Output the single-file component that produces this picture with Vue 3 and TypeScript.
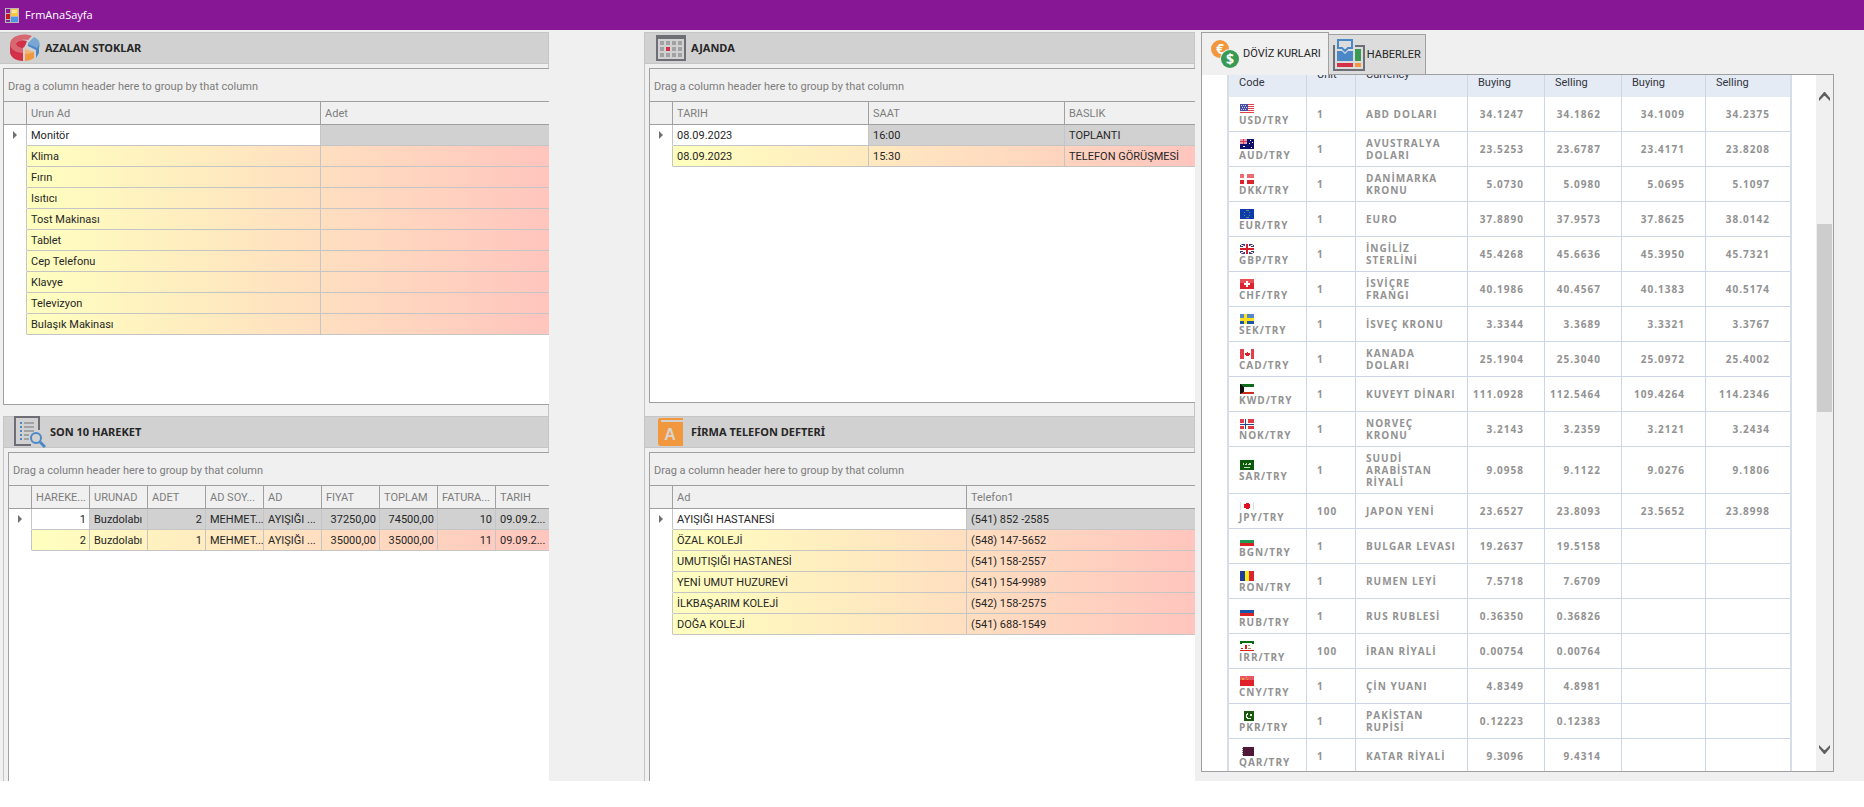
<script setup lang="ts">
import { ref } from 'vue'

interface Column {
  title: string
  width?: number
  numeric?: boolean
}
interface Panel {
  icon: 'chart' | 'calendar' | 'list' | 'book'
  title: string
  columns: Column[]
  rows: string[][]
}
interface Rate {
  code: string
  unit: number
  name: string
  values: string[]
}

const stocks: Panel = {
  icon: 'chart',
  title: 'AZALAN STOKLAR',
  columns: [{ title: 'Urun Ad', width: 294 }, { title: 'Adet' }],
  rows: [
    'Monitör', 'Klima', 'Fırın', 'Isıtıcı', 'Tost Makinası',
    'Tablet', 'Cep Telefonu', 'Klavye', 'Televizyon', 'Bulaşık Makinası'
  ].map((name) => [name, ''])
}

const movements: Panel = {
  icon: 'list',
  title: 'SON 10 HAREKET',
  columns: [
    { title: 'HAREKE...', width: 58, numeric: true },
    { title: 'URUNAD', width: 58 },
    { title: 'ADET', width: 58, numeric: true },
    { title: 'AD SOY...', width: 58 },
    { title: 'AD', width: 58 },
    { title: 'FIYAT', width: 58, numeric: true },
    { title: 'TOPLAM', width: 58, numeric: true },
    { title: 'FATURA...', width: 58, numeric: true },
    { title: 'TARIH' }
  ],
  rows: [
    ['1', 'Buzdolabı', '2', 'MEHMET...', 'AYIŞIĞI ...', '37250,00', '74500,00', '10', '09.09.2...'],
    ['2', 'Buzdolabı', '1', 'MEHMET...', 'AYIŞIĞI ...', '35000,00', '35000,00', '11', '09.09.2...']
  ]
}

const agenda: Panel = {
  icon: 'calendar',
  title: 'AJANDA',
  columns: [{ title: 'TARIH', width: 196 }, { title: 'SAAT', width: 196 }, { title: 'BASLIK' }],
  rows: [
    ['08.09.2023', '16:00', 'TOPLANTI'],
    ['08.09.2023', '15:30', 'TELEFON GÖRÜŞMESİ']
  ]
}

const phones: Panel = {
  icon: 'book',
  title: 'FİRMA TELEFON DEFTERİ',
  columns: [{ title: 'Ad', width: 294 }, { title: 'Telefon1' }],
  rows: [
    ['AYIŞIĞI HASTANESİ', '(541) 852 -2585'],
    ['ÖZAL KOLEJİ', '(548) 147-5652'],
    ['UMUTIŞIĞI HASTANESİ', '(541) 158-2557'],
    ['YENİ UMUT HUZUREVİ', '(541) 154-9989'],
    ['İLKBAŞARIM KOLEJİ', '(542) 158-2575'],
    ['DOĞA KOLEJİ', '(541) 688-1549']
  ]
}

const sides: Panel[][] = [
  [stocks, movements],
  [agenda, phones]
]

const activeTab = ref(0)

const rate = (code: string, unit: number, name: string, ...values: string[]): Rate => ({
  code,
  unit,
  name,
  values: [0, 1, 2, 3].map((i) => values[i] ?? '')
})

const rates: Rate[] = [
  rate('USD', 1, 'ABD DOLARI', '34.1247', '34.1862', '34.1009', '34.2375'),
  rate('AUD', 1, 'AVUSTRALYA\nDOLARI', '23.5253', '23.6787', '23.4171', '23.8208'),
  rate('DKK', 1, 'DANİMARKA\nKRONU', '5.0730', '5.0980', '5.0695', '5.1097'),
  rate('EUR', 1, 'EURO', '37.8890', '37.9573', '37.8625', '38.0142'),
  rate('GBP', 1, 'İNGİLİZ\nSTERLİNİ', '45.4268', '45.6636', '45.3950', '45.7321'),
  rate('CHF', 1, 'İSVİÇRE\nFRANGI', '40.1986', '40.4567', '40.1383', '40.5174'),
  rate('SEK', 1, 'İSVEÇ KRONU', '3.3344', '3.3689', '3.3321', '3.3767'),
  rate('CAD', 1, 'KANADA\nDOLARI', '25.1904', '25.3040', '25.0972', '25.4002'),
  rate('KWD', 1, 'KUVEYT DİNARI', '111.0928', '112.5464', '109.4264', '114.2346'),
  rate('NOK', 1, 'NORVEÇ\nKRONU', '3.2143', '3.2359', '3.2121', '3.2434'),
  rate('SAR', 1, 'SUUDİ\nARABİSTAN\nRİYALİ', '9.0958', '9.1122', '9.0276', '9.1806'),
  rate('JPY', 100, 'JAPON YENİ', '23.6527', '23.8093', '23.5652', '23.8998'),
  rate('BGN', 1, 'BULGAR LEVASI', '19.2637', '19.5158'),
  rate('RON', 1, 'RUMEN LEYİ', '7.5718', '7.6709'),
  rate('RUB', 1, 'RUS RUBLESİ', '0.36350', '0.36826'),
  rate('IRR', 100, 'İRAN RİYALİ', '0.00754', '0.00764'),
  rate('CNY', 1, 'ÇİN YUANI', '4.8349', '4.8981'),
  rate('PKR', 1, 'PAKİSTAN\nRUPİSİ', '0.12223', '0.12383'),
  rate('QAR', 1, 'KATAR RİYALİ', '9.3096', '9.4314')
]

// Each flag is a stack of [colour, path] layers on a 14 by 10 field.
const full = 'M0 0h14v10H0z'
const flags: Record<string, [string, string][]> = {
  USD: [
    ['#fff', full],
    ['#e2404a', 'M0 0h14v1H0zM0 2h14v1H0zM0 4h14v1H0zM0 6h14v1H0zM0 8h14v1H0z'],
    ['#4a4fa0', 'M0 0h8v7H0z'],
    ['#c4c8e6', 'M1 1h1v1H1zM3 1h1v1H3zM5 1h1v1H5zM2 3h1v1H2zM4 3h1v1H4zM6 3h1v1H6zM1 5h1v1H1zM3 5h1v1H3zM5 5h1v1H5z']
  ],
  AUD: [
    ['#10106e', full],
    ['#e6a0b4', 'M0 0h7v5H0z'],
    ['#d8384a', 'M3 0h1v5H3zM0 2h7v1H0z'],
    ['#fff', 'M10 1h1v1h-1zM12 3h1v1h-1zM9 4h1v1H9zM3 7h2v1H3zM11 8h1v1h-1z']
  ],
  DKK: [['#dc2430', full], ['#ec6a70', 'M0 0h14v4H0z'], ['#fff', 'M4 0h3v10H4zM0 4h14v2H0z']],
  EUR: [
    ['#0c3cac', full],
    ['#6d8a6e', 'M6 1h3v1H6zM4 3h1v1H4zM9 3h1v1H9zM4 6h1v1H4zM9 6h1v1H9zM6 8h3v1H6z']
  ],
  GBP: [
    ['#2c3a8c', full],
    ['#fff', 'M0 0h2v1h2v1h1v6H4v1H2v1H0V9h1V8h2V6h8v2h2v1h1v1h-2V9h-2V8H9V2h1V1h2V0h2v1h-1v1h-2v2H3V2H1V1H0z'],
    ['#fff', 'M5 0h4v10H5zM0 3h14v4H0z'],
    ['#e07080', 'M1 0h1v1H1zM3 1h1v1H3zM12 0h1v1h-1zM10 1h1v1h-1zM1 9h1v1H1zM3 8h1v1H3zM12 9h1v1h-1zM10 8h1v1h-1z'],
    ['#d4202c', 'M6 0h2v10H6zM0 4h14v2H0z']
  ],
  CHF: [['#dc2430', full], ['#e85058', 'M0 0h14v4H0z'], ['#fff', 'M6 2h2v6H6zM4 4h6v2H4z']],
  SEK: [['#1858a8', full], ['#5288cc', 'M0 0h14v4H0z'], ['#ffe01c', 'M4 0h3v10H4zM0 4h14v3H0z']],
  CAD: [
    ['#fff', full],
    ['#e04048', 'M0 0h4v10H0zM11 0h3v10h-3z'],
    ['#dc2028', 'M7 3h1v1h2v2H9v1H6V6H5V4h2z']
  ],
  KWD: [['#fff', full], ['#106c1c', 'M0 0h14v3H0z'], ['#c8301c', 'M0 8h14v2H0z'], ['#101010', 'M0 0l4 3v5l-4 2z']],
  NOK: [['#e03c48', full], ['#fff', 'M4 0h4v10H4zM0 4h14v3H0z'], ['#2c4494', 'M5 0h1v10H5zM0 5h14v1H0z']],
  SAR: [['#0a5a0a', full], ['#c8dcc8', 'M3 3h1v2H3zM5 4h1v1H5zM6 3h1v2H6zM8 4h1v1H8zM9 3h2v2H9zM4 7h6v1H4z']],
  JPY: [['#fff', full], ['#dcdcdc', 'M0 1h1v8H0zM13 1h1v8h-1z'], ['#e01020', 'M6 2h3v1h1v4H9v1H6V7H4V3h2z']],
  BGN: [['#fff', full], ['#1e9a56', 'M0 4h14v3H0z'], ['#dc2020', 'M0 7h14v3H0z']],
  RON: [['#1c3c9c', 'M0 0h5v10H0z'], ['#ffec10', 'M5 0h4v10H5z'], ['#d8242c', 'M9 0h5v10H9z']],
  RUB: [['#fff', full], ['#1656ac', 'M0 4h14v3H0z'], ['#dc2424', 'M0 7h14v3H0z']],
  IRR: [
    ['#fff', full],
    ['#0c6c14', 'M0 0h14v2H0zM0 2h2v1H0zM12 2h2v1h-2z'],
    ['#e02020', 'M0 9h14v1H0zM5 4h2v4H5zM1 7h2v1H1z'],
    ['#a8906c', 'M8 4h2v1H8zM8 7h3v1H8z']
  ],
  CNY: [['#e02028', full], ['#e85860', 'M0 0h14v4H0z'], ['#f4a030', 'M2 2h2v2H2zM6 1h1v1H6zM7 3h1v1H7z']],
  PKR: [['#1c5810', 'M4 0h10v10H4z'], ['#e4f0e0', 'M8 2H7v1H6v4h1v1h4V7H8V6H7V4h1zM10 3h2v2h-2z']],
  QAR: [['#501838', 'M3 1h11v9H3z'], ['#8c6c7c', 'M2 2h1v1H2zM2 4h1v1H2zM2 6h1v1H2zM2 8h1v1H2z']]
}
</script>

<template>
  <div class="window">
    <header class="titlebar">
      <svg class="app-icon" viewBox="0 0 14 15" aria-hidden="true">
        <path fill="#b9b4bd" d="M0 0h14v15H0z" />
        <path fill="#8c1a96" d="M1 1h4v4H1z" />
        <path fill="#c41a1c" d="M1 6h4v5H1z" />
        <path fill="#f7c840" d="M6 1h7v7H6z" />
        <path fill="#ffe89a" d="M7 2h5v3H7z" />
        <path fill="#4f96e0" d="M6 9h7v5H6z" />
        <path fill="#7a3088" d="M1 12h4v2H1z" />
      </svg>
      <h1>FrmAnaSayfa</h1>
    </header>

    <main class="workspace">
      <div v-for="(side, s) in sides" :key="s" class="side" :class="s === 0 ? 'side-left' : 'side-middle'">
        <section v-for="panel in side" :key="panel.title" class="panel" :class="'panel-' + panel.icon">
          <h2 class="caption">
            <svg v-if="panel.icon === 'chart'" class="icon" viewBox="0 0 32 32" aria-hidden="true">
              <path fill="#d3304a" d="M1 12v8c0 5 6 9 13 9v-9z" />
              <path fill="#d76872" fill-rule="evenodd" d="M23 4C14 0 1 4 1 12c0 5 6 9 13 9v-5c-4 0-7-2-7-4 0-3 6-5 12-4z" />
              <path fill="#d3304a" d="M7 12c0-3 6-5 11-3l-2 5-2 2c-4 0-7-2-7-4z" />
              <path fill="#79a6d4" d="M25 5c5 2 7 7 5 11l-2 1-9-4v-2z" />
              <path fill="#4a88c8" d="M30 13v8l-3 5v-8l-8-4v-2l9 4z" />
              <path fill="#f4b475" d="M16 17l9 3c-2 2-5 3-9 3z" />
              <path fill="#f1973e" d="M16 22c4 0 7-1 9-2v6c-3 2-6 3-9 3z" />
            </svg>
            <svg v-else-if="panel.icon === 'calendar'" class="icon" viewBox="0 0 32 32" aria-hidden="true">
              <path fill="#6d6e76" fill-rule="evenodd" d="M1 3h30v26H1zM3 7v20h26V7z" />
              <path fill="#a2a2a4" d="M5 9h4v4H5zM11 9h4v4h-4zM17 9h4v4h-4zM23 9h4v4h-4zM5 15h4v4H5zM17 15h4v4h-4zM23 15h4v4h-4zM5 21h4v4H5zM11 21h4v4h-4zM17 21h4v4h-4zM23 21h4v4h-4z" />
              <path fill="#d3304a" d="M11 15h4v4h-4z" />
            </svg>
            <svg v-else-if="panel.icon === 'list'" class="icon" viewBox="0 0 32 32" aria-hidden="true">
              <path fill="none" stroke="#6d6e76" stroke-width="2" d="M25 14V1H1v28h16" />
              <path fill="#4a88c8" d="M6 6h2v2H6zM6 10h2v2H6zM6 14h2v2H6zM6 18h2v2H6zM6 22h2v2H6z" />
              <path fill="#a2a2a4" d="M10 6h10v2H10zM10 10h10v2H10zM10 14h10v2H10zM10 18h5v2h-5zM10 22h5v2h-5z" />
              <circle cx="22" cy="22" r="5" fill="none" stroke="#4a88c8" stroke-width="2" />
              <path stroke="#4a88c8" stroke-width="3" d="M26 26l5 5" />
            </svg>
            <svg v-else class="icon" viewBox="0 0 32 32" aria-hidden="true">
              <path fill="#f1973e" d="M5 2h23v2H6v2h22v24H6c-2 0-3-1-3-3V4c0-1 1-2 2-2z" />
              <text x="15" y="24" text-anchor="middle" class="icon-letter">A</text>
            </svg>
            <span>{{ panel.title }}</span>
          </h2>
          <div class="gridbox">
            <p class="group-hint">Drag a column header here to group by that column</p>
            <table class="datagrid">
              <colgroup>
                <col style="width: 23px" />
                <col v-for="c in panel.columns" :key="c.title" :style="c.width ? { width: c.width + 'px' } : {}" />
              </colgroup>
              <thead>
                <tr>
                  <td></td>
                  <th v-for="c in panel.columns" :key="c.title" scope="col">{{ c.title }}</th>
                </tr>
              </thead>
              <tbody>
                <tr v-for="(row, r) in panel.rows" :key="r" :class="{ current: r === 0 }">
                  <td class="marker">
                    <svg v-if="r === 0" viewBox="0 0 4 8" aria-hidden="true"><path d="M0 0l4 4-4 4z" /></svg>
                  </td>
                  <td v-for="(cell, i) in row" :key="i" :class="{ numeric: panel.columns[i].numeric }">{{ cell }}</td>
                </tr>
              </tbody>
            </table>
          </div>
        </section>
      </div>

      <section class="tabs">
        <div class="tablist" role="tablist">
          <button type="button" role="tab" :aria-selected="activeTab === 0" @click="activeTab = 0">
            <svg class="icon" viewBox="0 0 32 32" aria-hidden="true">
              <circle cx="11" cy="11" r="9" fill="#f1973e" />
              <text x="11" y="16" text-anchor="middle" class="coin">€</text>
              <circle cx="21" cy="21" r="10" fill="#f0f0f0" />
              <circle cx="21" cy="21" r="9" fill="#3a9a54" />
              <text x="21" y="26" text-anchor="middle" class="coin">$</text>
            </svg>
            <span>DÖVİZ KURLARI</span>
          </button>
          <button type="button" role="tab" :aria-selected="activeTab === 1" @click="activeTab = 1">
            <svg class="icon" viewBox="0 0 32 32" aria-hidden="true">
              <path fill="none" stroke="#6d6e76" stroke-width="2" d="M2 7H1v24h30V7h-9" />
              <path fill="#4a88c8" d="M4 12h5l3 3 3-3h5v10H4z" />
              <path fill="#dcdcdc" d="M4 0h16v11H4z" />
              <path fill="none" stroke="#4a88c8" stroke-width="2" d="M5 1h14v8h-4l-3 3-3-3H5z" />
              <path fill="#3a9a54" d="M22 10h6v12h-6z" />
              <path fill="#d3304a" d="M4 24h16v4H4z" />
              <path fill="#f1973e" d="M22 24h6v4h-6z" />
            </svg>
            <span>HABERLER</span>
          </button>
        </div>

        <div class="browser" role="tabpanel">
          <div class="page">
            <table class="rates">
              <colgroup>
                <col class="w-code" /><col class="w-unit" /><col class="w-name" />
                <col class="w-rate" /><col class="w-rate" /><col class="w-wide" /><col class="w-wide" />
              </colgroup>
              <thead>
                <tr>
                  <th scope="col">Code</th>
                  <th scope="col" class="mid">Unit</th>
                  <th scope="col" class="mid">Currency</th>
                  <th scope="col">Buying</th>
                  <th scope="col">Selling</th>
                  <th scope="col">Buying</th>
                  <th scope="col">Selling</th>
                </tr>
              </thead>
              <tbody>
                <tr v-for="r in rates" :key="r.code">
                  <td>
                    <svg class="flag" viewBox="0 0 14 10" shape-rendering="crispEdges" aria-hidden="true">
                      <path v-for="(layer, i) in flags[r.code]" :key="i" :fill="layer[0]" :d="layer[1]" />
                    </svg>
                    {{ r.code }}/TRY
                  </td>
                  <td>{{ r.unit }}</td>
                  <td class="name">{{ r.name }}</td>
                  <td v-for="(v, i) in r.values" :key="i" class="value">{{ v }}</td>
                </tr>
              </tbody>
            </table>
          </div>
          <div class="scrollbar">
            <button type="button" aria-label="Scroll up">
              <svg viewBox="0 0 11 9" aria-hidden="true"><path d="M0 9V6l5-6h1l5 6v3L6 4H5z" /></svg>
            </button>
            <div class="track"><div class="before"></div><div class="thumb"></div><div class="after"></div></div>
            <button type="button" aria-label="Scroll down">
              <svg viewBox="0 0 11 9" aria-hidden="true"><path d="M0 0v3l5 6h1l5-6V0L6 5H5z" /></svg>
            </button>
          </div>
        </div>
      </section>
    </main>
  </div>
</template>

<style>
body {
  margin: 0;
  background: #fff;
}
</style>

<style scoped>
.window {
  font: 11px/14px Roboto, "Liberation Sans", sans-serif;
  color: #262626;
}
h1, h2, p {
  margin: 0;
}
button {
  margin: 0;
  font: inherit;
  color: inherit;
}
.titlebar {
  display: flex;
  align-items: center;
  gap: 6px;
  height: 30px;
  padding: 0 5px;
  background: #881796;
}
.titlebar h1 {
  font: 11px/14px "Open Sans", sans-serif;
  color: #fff;
}
.app-icon {
  width: 14px;
  height: 15px;
}
.workspace {
  display: grid;
  grid-template-columns: 549fr 95fr 551fr 669fr;
  height: calc(100vh - 58px);
  min-height: 560px;
  padding-top: 2px;
  background: #f0f0f0;
}
.side {
  display: flex;
  flex-direction: column;
  min-width: 0;
  min-height: 0;
}
.side-left {
  grid-column: 1;
}
.side-middle {
  grid-column: 3;
}
.panel {
  display: flex;
  flex: 365 1 0;
  flex-direction: column;
  box-sizing: border-box;
  min-height: 0;
  border: solid #c5c5c5;
  border-width: 0 1px;
}
.panel:first-child {
  flex-grow: 384;
}
.panel-chart {
  border-left: 0;
}
.panel-list {
  margin-left: 3px;
}
.caption {
  display: flex;
  flex: none;
  align-items: center;
  gap: 4px;
  box-sizing: border-box;
  height: 32px;
  padding-left: 10px;
  border: solid #c5c5c5;
  border-width: 1px 0;
  background: #d1d1d1;
  font: bold 11px/14px "Noto Sans", sans-serif;
}
.panel-chart .caption {
  padding-left: 9px;
}
.icon {
  flex: none;
  width: 32px;
  height: 32px;
}
.icon-letter {
  font: bold 16px "Liberation Sans", sans-serif;
  fill: #d8d4cf;
}
.coin {
  font: bold 14px "Open Sans", sans-serif;
  fill: #fff;
}
.gridbox {
  flex: 1;
  min-height: 0;
  margin: 4px -1px 0 4px;
  overflow: hidden;
  border: solid #a0a0a0;
  border-width: 1px 0 0 1px;
  background: #fff;
}
.panel-chart .gridbox {
  margin-left: 3px;
}
.panel:first-child .gridbox {
  margin-bottom: 11px;
  border-bottom-width: 1px;
}
.panel-calendar:first-child .gridbox {
  margin-bottom: 13px;
}
.group-hint {
  padding: 11px 4px 7px;
  border-bottom: 1px solid #a0a0a0;
  background: #f0f0f0;
  color: #7d7d7d;
}
.datagrid {
  width: 100%;
  border-spacing: 0;
  table-layout: fixed;
}
.datagrid th,
.datagrid td {
  box-sizing: border-box;
  height: 21px;
  padding: 2px 3px 0 4px;
  overflow: hidden;
  border: solid #c5c5c5;
  border-width: 0 1px 1px 0;
  font-weight: normal;
  text-align: left;
  white-space: nowrap;
}
.datagrid thead th,
.datagrid thead td {
  height: 23px;
  border-color: #a0a0a0;
  background: #f0f0f0;
  color: #7d7d7d;
}
.datagrid tr > :last-child {
  border-right: 0;
}
.datagrid tbody tr {
  background: linear-gradient(to right, #ffffbf 23px, #ffe0c0 56%, #ffc5be);
}
.datagrid tbody .current {
  background: #d1d1d1;
}
.datagrid .current td:nth-child(2) {
  background: #fff;
}
.datagrid .numeric {
  text-align: right;
}
.datagrid .marker {
  padding: 0 0 0 9px;
  border-bottom-color: #fff;
  background: #fff;
}
.marker svg {
  display: block;
  width: 4px;
  height: 8px;
  fill: #707070;
}
.tabs {
  display: flex;
  flex-direction: column;
  min-width: 0;
  min-height: 0;
  padding: 0 30px 9px 6px;
}
.tablist {
  display: flex;
  flex: none;
  align-items: flex-end;
  position: relative;
}
.tablist button {
  display: flex;
  align-items: center;
  gap: 2px;
  box-sizing: border-box;
  height: 40px;
  padding: 0 4px;
  border: 1px solid #a0a0a0;
  border-width: 1px 1px 0 0;
  background: #dcdcdc;
}
.tablist button[aria-selected="true"] {
  height: 43px;
  margin-bottom: -1px;
  padding: 0 7px;
  border-left-width: 1px;
  background: #f0f0f0;
}
.browser {
  display: flex;
  flex: 1;
  min-height: 0;
  border: 1px solid #a0a0a0;
  background: #fff;
}
.page {
  flex: 1;
  min-width: 0;
  padding: 0 26px 0 25px;
  overflow: hidden;
}
.rates {
  width: 100%;
  margin-top: -22px;
  border: solid #d6dde9;
  border-width: 0 2px;
  border-spacing: 0;
  table-layout: fixed;
  color: #929292;
  font: bold 10px/12px "Open Sans", sans-serif;
  letter-spacing: 1px;
}
.w-code { width: 78px; }
.w-unit { width: 49px; }
.w-name { width: 112px; }
.w-rate { width: 77px; }
.w-wide { width: 84px; }
.rates th,
.rates td {
  padding: 5px 0 5px 10px;
  border: solid #cdd6e6;
  border-width: 0 1px 1px 0;
  text-align: left;
}
.rates tr > :last-child {
  border-right: 0;
}
.rates th {
  box-sizing: border-box;
  height: 44px;
  padding-bottom: 8px;
  border-bottom: 0;
  background: #e5ebf5;
  color: #30343c;
  font: 11px/12px Roboto, sans-serif;
  letter-spacing: normal;
  vertical-align: bottom;
}
.rates .mid {
  padding: 0 0 0 10px;
  vertical-align: middle;
}
.rates .name {
  white-space: pre;
}
.rates .value {
  padding: 5px 20px 5px 0;
  text-align: right;
}
.flag {
  display: block;
  width: 14px;
  height: 10px;
  margin: 2px 0 0 1px;
}
.scrollbar {
  display: flex;
  flex: none;
  flex-direction: column;
  width: 17px;
  padding: 13px 0;
  background: #f0f0f0;
}
.scrollbar button {
  display: grid;
  place-items: center;
  width: 17px;
  height: 17px;
  padding: 0;
  border: 0;
  background: none;
}
.scrollbar svg {
  width: 11px;
  height: 9px;
  fill: #606060;
}
.track {
  display: flex;
  flex: 1;
  flex-direction: column;
}
.before { flex: 119; }
.thumb {
  flex: 188;
  margin: 0 1px;
  background: #cdcdcd;
}
.after { flex: 330; }
</style>
